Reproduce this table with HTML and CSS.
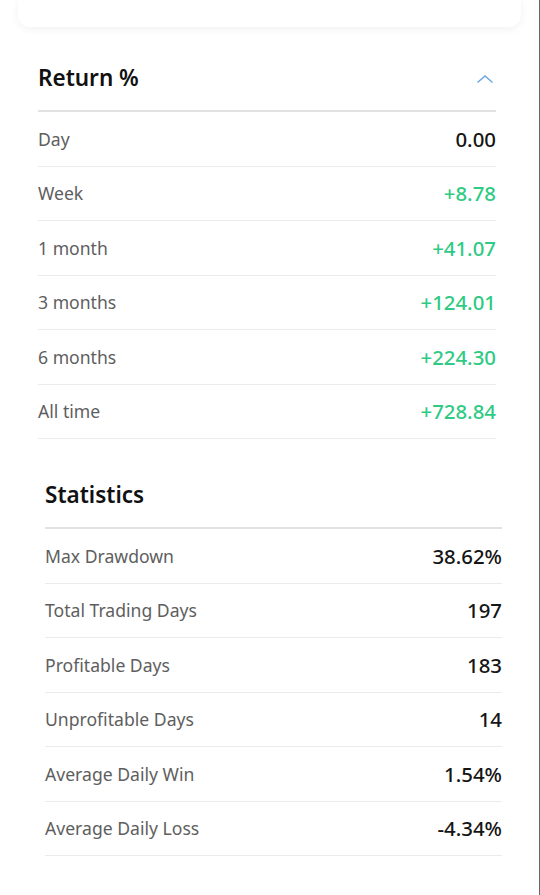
FILE: index.html
```html
<!DOCTYPE html>
<html>
<head>
<meta charset="utf-8">
<link rel="stylesheet" href="styles.css">
</head>
<body>
<div class="page">
  <div class="top-card"></div>

  <section class="section section-return">
    <div class="sec-head">
      <h2 class="sec-title">Return %</h2>
      <svg class="chev" width="18" height="10" viewBox="0 0 18 10"><path d="M1.5 8.5 L9 2 L16.5 8.5" fill="none" stroke="#6aa6da" stroke-width="1.4"/></svg>
    </div>
    <div class="row"><span class="label">Day</span><span class="value">0.00</span></div>
    <div class="row"><span class="label">Week</span><span class="value pos">+8.78</span></div>
    <div class="row"><span class="label">1 month</span><span class="value pos">+41.07</span></div>
    <div class="row"><span class="label">3 months</span><span class="value pos">+124.01</span></div>
    <div class="row"><span class="label">6 months</span><span class="value pos">+224.30</span></div>
    <div class="row"><span class="label">All time</span><span class="value pos">+728.84</span></div>
  </section>

  <section class="section section-stats">
    <div class="sec-head">
      <h2 class="sec-title">Statistics</h2>
    </div>
    <div class="row"><span class="label">Max Drawdown</span><span class="value">38.62%</span></div>
    <div class="row"><span class="label">Total Trading Days</span><span class="value">197</span></div>
    <div class="row"><span class="label">Profitable Days</span><span class="value">183</span></div>
    <div class="row"><span class="label">Unprofitable Days</span><span class="value">14</span></div>
    <div class="row"><span class="label">Average Daily Win</span><span class="value">1.54%</span></div>
    <div class="row"><span class="label">Average Daily Loss</span><span class="value">-4.34%</span></div>
  </section>
</div>
</body>
</html>
```
FILE: styles.css
```css
* { box-sizing: border-box; }
html, body {
  margin: 0;
  padding: 0;
  background: #ffffff;
}
body {
  font-family: "Noto Sans", "Open Sans", sans-serif;
  color: #111;
  width: 540px;
  height: 895px;
  overflow: hidden;
  border-right: 1px solid #666;
}
.page {
  display: flex;
  flex-direction: column;
}
.top-card {
  margin: 0 18px 0 18px;
  height: 27px;
  background: #fff;
  border-radius: 0 0 12px 12px;
  box-shadow: 0 2px 8px rgba(0,0,0,0.06);
}
.section-return {
  margin: 17px 43px 0 38px;
}
.section-stats {
  margin: 22px 37px 0 45px;
}
.sec-head {
  height: 68px;
  display: flex;
  align-items: center;
  justify-content: space-between;
  border-bottom: 2px solid #e2e2e2;
}
.sec-title {
  margin: 0;
  font-size: 22.5px;
  font-weight: 600;
  color: #111;
}
.chev {
  margin-right: 2px;
  margin-top: 4px;
}
.row {
  height: 54.5px;
  display: flex;
  align-items: center;
  justify-content: space-between;
  border-bottom: 1px solid #ebebeb;
}
.label {
  font-size: 17.6px;
  color: #5e5e5e;
}
.value {
  font-size: 20.4px;
  font-weight: 500;
  color: #151515;
}
.value.pos {
  color: #2fca84;
}
```
